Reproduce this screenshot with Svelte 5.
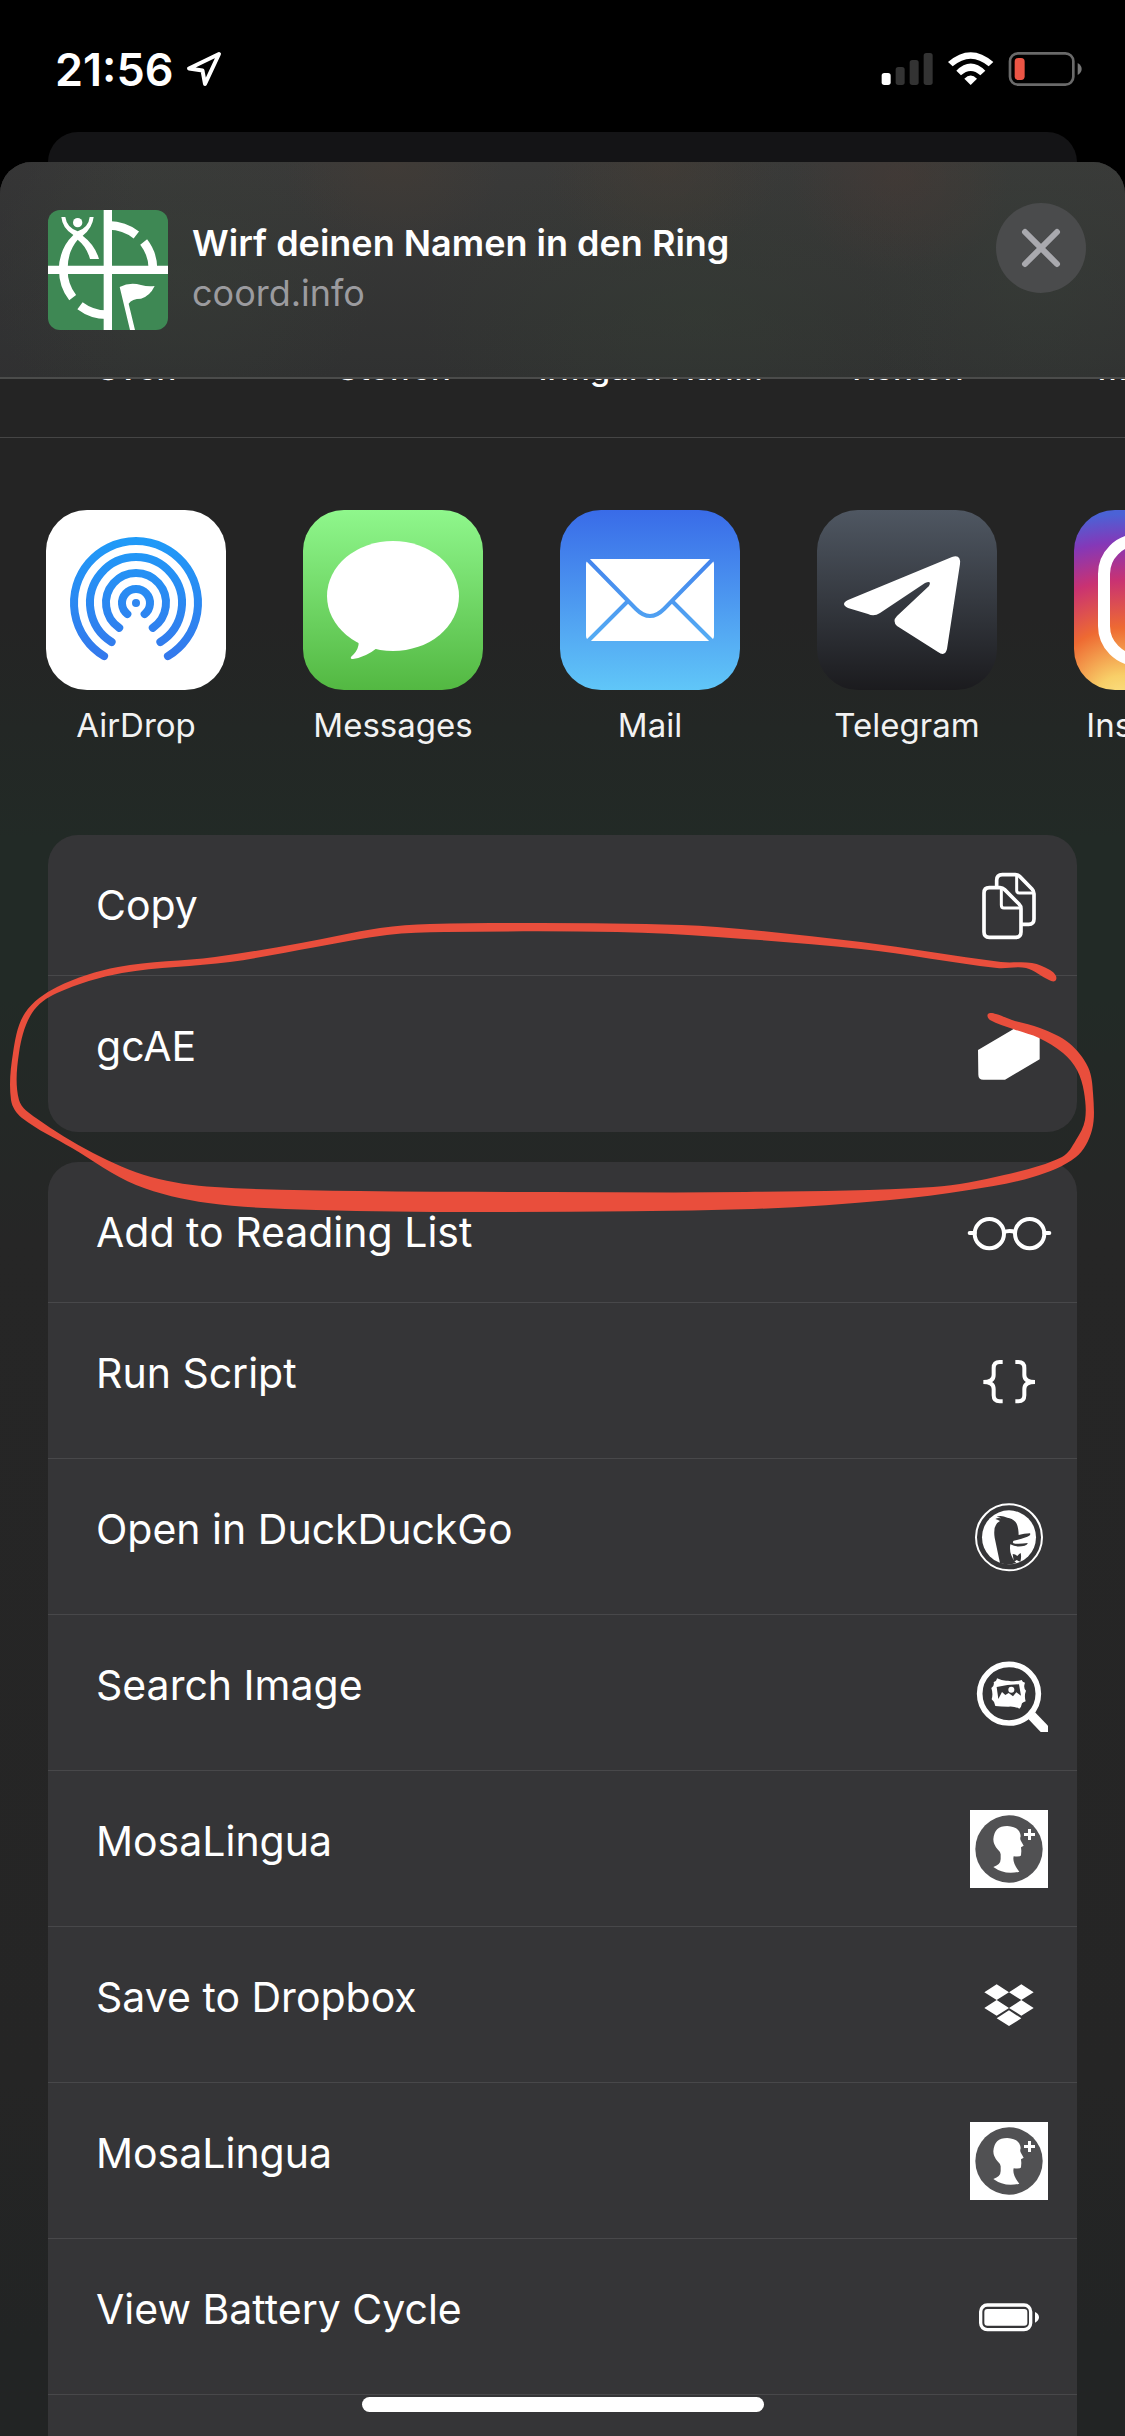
<script>
  const people = ['Sven', 'Steffen', 'Irmgard Han…', 'Kenton', 'Matthias'];
  const apps = [
    { name: 'AirDrop', icon: 'airdrop' },
    { name: 'Messages', icon: 'messages' },
    { name: 'Mail', icon: 'mail' },
    { name: 'Telegram', icon: 'telegram' },
    { name: 'Instagram', icon: 'instagram' }
  ];
  const groups = [
    [
      { label: 'Copy', icon: 'copy' },
      { label: 'gcAE', icon: 'shape' }
    ],
    [
      { label: 'Add to Reading List', icon: 'glasses' },
      { label: 'Run Script', icon: 'braces' },
      { label: 'Open in DuckDuckGo', icon: 'duck' },
      { label: 'Search Image', icon: 'search' },
      { label: 'MosaLingua', icon: 'head' },
      { label: 'Save to Dropbox', icon: 'dropbox' },
      { label: 'MosaLingua', icon: 'head' },
      { label: 'View Battery Cycle', icon: 'battery' },
      { label: '', icon: '' }
    ]
  ];

  // AirDrop rings: open at the bottom, one arc per radius
  function ring(r, deg) {
    const a = (deg * Math.PI) / 180;
    const dx = r * Math.sin(a);
    const y = 93 + r * Math.cos(a);
    return `M${90 - dx} ${y}A${r} ${r} 0 1 1 ${90 + dx} ${y}`;
  }
  const rings = [ring(62, 31), ring(46, 32), ring(30, 34), ring(14, 38)];

  // Outline of the hand-drawn marker loop, outer edge then inner edge
  const loop = [
    [1056, 976], [1050, 970], [1032, 963], [1001, 962], [861, 942], [717, 927], [646, 924], [540, 923], [430, 924],
    [380, 928], [301, 943], [215, 957], [118, 967], [57, 987], [25, 1013], [13, 1053], [11, 1100],
    [22, 1118], [72, 1148], [136, 1185], [208, 1203], [316, 1210], [502, 1212], [753, 1209], [890, 1200],
    [969, 1190], [1033, 1177], [1076, 1157], [1092, 1130], [1093, 1093], [1088, 1067], [1069, 1043],
    [1040, 1028], [1012, 1020], [996, 1014], [988, 1014], [990, 1020], [1013, 1029], [1039, 1038], [1063, 1053],
    [1077, 1070], [1084, 1092], [1085, 1120], [1076, 1140], [1062, 1157], [1004, 1175], [933, 1187],
    [746, 1192], [550, 1192], [359, 1191], [215, 1187], [151, 1177], [93, 1153], [36, 1118], [19, 1100], [19, 1053],
    [32, 1013], [57, 993], [122, 973], [230, 962], [316, 947], [387, 935], [445, 932], [617, 932], [717, 937],
    [861, 949], [997, 968], [1026, 968], [1049, 980], [1055, 981]
  ];
  // Smooth curve that passes through every point
  const count = loop.length;
  const at = (i) => loop[(i + count) % count];
  const loopPath =
    `M${at(0).join(' ')}` +
    loop
      .map((p, i) => {
        const [a, c, d] = [at(i - 1), at(i + 1), at(i + 2)];
        const reach = Math.hypot(c[0] - p[0], c[1] - p[1]) / 3;
        const step = (u, v) => {
          const len = Math.hypot(v[0] - u[0], v[1] - u[1]) || 1;
          return [((v[0] - u[0]) / len) * reach, ((v[1] - u[1]) / len) * reach];
        };
        const s = step(a, c);
        const e = step(p, d);
        return `C${p[0] + s[0]} ${p[1] + s[1]} ${c[0] - e[0]} ${c[1] - e[1]} ${c[0]} ${c[1]}`;
      })
      .join('') + 'Z';
</script>

<div class="screen">
  <div class="status">
    <div class="clock">
      <span>21:56</span>
      <svg width="36" height="36" viewBox="0 0 36 36" aria-hidden="true">
        <path d="M33 3 3 17.5l13.5 2L19 33z" fill="none" stroke="#fff" stroke-width="4" stroke-linejoin="round" />
      </svg>
    </div>
    <svg width="204" height="38" viewBox="64 60 612 114" aria-hidden="true">
      <rect x="66" y="129" width="27" height="36" rx="8" fill="#fff" />
      <rect x="108" y="111" width="27" height="54" rx="8" fill="#333" />
      <rect x="150" y="90" width="27" height="75" rx="8" fill="#333" />
      <rect x="192" y="69" width="27" height="96" rx="8" fill="#333" />
      <path d="M265 96Q333 37 401 96L387 109Q333 63 279 109Z" fill="#fff" />
      <path d="M290 122Q333 79 377 122L362 136Q333 110 304 136Z" fill="#fff" />
      <path d="M314 146Q333 127 352 146L333 165Z" fill="#fff" />
      <rect x="451" y="70" width="190" height="94" rx="24" fill="none" stroke="#6a6a6a" stroke-width="8" />
      <rect x="465" y="84" width="30" height="66" rx="11" fill="#ec5545" />
      <path d="M654 99q12 7 12 18t-12 18z" fill="#777" />
    </svg>
  </div>

  <div class="behind"></div>

  <section class="sheet" aria-label="Share">
    <header>
      <svg class="thumb" viewBox="54 60 360 360" aria-hidden="true">
        <rect x="54" y="60" width="360" height="360" fill="#3e8854" />
        <g fill="none" stroke="#fff" stroke-width="26">
          <path d="M234 106A134 134 0 0 1 319 135" />
          <path d="M341 156A134 134 0 0 1 369 240" />
          <path d="M100 240A134 134 0 0 0 128 323" />
          <path d="M150 347A134 134 0 0 0 234 374" />
        </g>
        <path d="M221 60h25v360h-25zM54 227h360v25H54z" fill="#fff" />
        <circle cx="143" cy="98" r="14" fill="#fff" />
        <path d="M86 240Q88 175 130 135Q97 115 94 81H106Q110 112 143 124Q176 112 179 81H191Q187 115 158 137Q195 165 207 207H180Q170 170 143 149Q112 185 113 240Z" fill="#fff" />
        <path d="M269 291Q300 275 333 285Q354 291 374 288Q360 318 333 326Q306 326 296 341L315 420H300Z" fill="#fff" />
      </svg>
      <div class="titles">
        <h1>Wirf deinen Namen in den Ring</h1>
        <p>coord.info</p>
      </div>
      <button class="close" aria-label="Close">
        <svg width="90" height="90" viewBox="0 0 90 90" aria-hidden="true">
          <path d="M29 29 61 61M61 29 29 61" stroke="#a9a9ae" stroke-width="6" stroke-linecap="round" />
        </svg>
      </button>
    </header>

    <div class="body">
      <ul class="people">
        {#each people as person}
          <li>{person}</li>
        {/each}
      </ul>

      <div class="apps">
        {#each apps as app}
          <button class="app">
            <svg class="appicon" viewBox="0 0 180 180" aria-hidden="true">
              {#if app.icon === 'airdrop'}
                <linearGradient id="ad" gradientUnits="userSpaceOnUse" x1="0" y1="27" x2="0" y2="150">
                  <stop offset="0" stop-color="#1f9bf8" /><stop offset="1" stop-color="#3478ec" />
                </linearGradient>
                <rect width="180" height="180" fill="#fff" />
                <g fill="none" stroke="url(#ad)" stroke-width="8" stroke-linecap="round">
                  {#each rings as d}<path {d} />{/each}
                </g>
                <circle cx="90" cy="93" r="4" fill="#2f87f0" />
              {:else if app.icon === 'messages'}
                <linearGradient id="ms" x1="0" y1="0" x2="0" y2="1">
                  <stop offset="0" stop-color="#8ff78c" /><stop offset="1" stop-color="#53b842" />
                </linearGradient>
                <rect width="180" height="180" fill="url(#ms)" />
                <ellipse cx="90" cy="86" rx="66" ry="55" fill="#fff" />
                <path d="M53 126Q60 136 48 147Q47 149 50 149Q63 147 74 138Z" fill="#fff" />
              {:else if app.icon === 'mail'}
                <linearGradient id="ml" gradientUnits="userSpaceOnUse" x1="0" y1="0" x2="0" y2="180">
                  <stop offset="0" stop-color="#396be8" /><stop offset="1" stop-color="#60c6f8" />
                </linearGradient>
                <rect width="180" height="180" fill="url(#ml)" />
                <rect x="26" y="49" width="128" height="82" rx="5" fill="#fff" />
                <path d="M27 49 76 99Q90 113 104 99L153 49M28 131 68 91M152 131 112 91" fill="none" stroke="url(#ml)" stroke-width="4" />
              {:else if app.icon === 'telegram'}
                <linearGradient id="tg" x1="0" y1="0" x2="0" y2="1">
                  <stop offset="0" stop-color="#4f5762" /><stop offset="1" stop-color="#1b1b1e" />
                </linearGradient>
                <rect width="180" height="180" fill="url(#tg)" />
                <path d="M135 47Q144 44 143 54L130 139Q128 147 121 142L80 116Q75 111 80 106L112 76Q115 70 108 73L63 103Q57 107 51 104L31 98Q23 94 31 90Z" fill="#fff" />
              {:else}
                <radialGradient id="ig" gradientUnits="userSpaceOnUse" cx="48" cy="194" r="190">
                  <stop offset="0" stop-color="#fbe58a" /><stop offset=".15" stop-color="#f8cf68" />
                  <stop offset=".4" stop-color="#ee6a32" /><stop offset=".65" stop-color="#c93272" />
                  <stop offset=".85" stop-color="#8438b8" /><stop offset="1" stop-color="#4b62d6" />
                </radialGradient>
                <rect width="180" height="180" fill="url(#ig)" />
                <rect x="30" y="30" width="120" height="120" rx="34" fill="none" stroke="#fff" stroke-width="12" />
                <circle cx="90" cy="90" r="28" fill="none" stroke="#fff" stroke-width="12" />
              {/if}
            </svg>
            <span>{app.name}</span>
          </button>
        {/each}
      </div>

      {#each groups as group}
        <div class="card">
          {#each group as row}
            <button class="row" aria-label={row.label || 'More'}>
              <span>{row.label}</span>
              {#if row.icon === 'copy'}
                <svg viewBox="90 48 234 234" aria-hidden="true">
                  <g fill="none" stroke="#fff" stroke-width="11" stroke-linejoin="round">
                    <path d="M170 112V91Q170 74 187 74H226Q234 74 239 79L276 117Q282 123 282 131V207Q282 223 266 223H246" />
                    <path d="M230 75V121Q230 129 238 129H281" stroke-width="9" />
                    <path d="M148 113H180Q188 113 194 119L237 162Q243 168 243 176V246Q243 262 227 262H148Q132 262 132 246V129Q132 113 148 113Z" />
                    <path d="M184 114V165Q184 174 192 174H242" stroke-width="9" />
                  </g>
                </svg>
              {:else if row.icon === 'shape'}
                <svg viewBox="90 495 234 234" aria-hidden="true">
                  <path d="M114 600 221 537H299V628L195 689H130Q115 689 115 674Z" fill="#fff" />
                </svg>
              {:else if row.icon === 'glasses'}
                <svg class="wide" viewBox="78 39 258 234" aria-hidden="true">
                  <g fill="none" stroke="#fff" stroke-width="12">
                    <circle cx="148" cy="161" r="44" /><circle cx="269" cy="161" r="44" />
                    <path d="M190 157Q208 149 227 157" />
                    <path d="M89 159H104M313 159H328" stroke-linecap="round" />
                  </g>
                </svg>
              {:else if row.icon === 'braces'}
                <svg viewBox="90 484 234 234" aria-hidden="true">
                  <g fill="none" stroke="#fff" stroke-width="12">
                    <path d="M188 544H179Q161 544 161 562V583Q161 604 130 604Q161 604 161 625V644Q161 662 179 662H188" />
                    <path d="M226 544H235Q253 544 253 562V583Q253 604 285 604Q253 604 253 625V644Q253 662 235 662H226" />
                  </g>
                </svg>
              {:else if row.icon === 'duck'}
                <svg viewBox="90 53 234 234" aria-hidden="true">
                  <circle cx="207" cy="171" r="99" fill="none" stroke="#fff" stroke-width="6" />
                  <circle cx="207" cy="171" r="81" fill="#fff" />
                  <path d="M180 248Q173 215 164 172Q158 132 180 122Q172 117 166 116Q172 112 184 114Q176 109 170 109Q184 104 202 112Q216 113 226 124Q235 134 236 164Q252 160 270 159Q274 164 262 169Q240 177 221 181Q214 188 226 190Q244 191 263 188Q264 193 254 196Q230 202 211 192Q206 220 225 244L229 248Q204 256 180 248Z" fill="#353537" />
                  <path d="M218 221Q226 221 232 227Q238 220 242 218Q245 230 241 244Q235 243 230 239Q226 243 221 241Z" fill="#353537" />
                </svg>
              {:else if row.icon === 'search'}
                <svg viewBox="90 520 234 234" aria-hidden="true">
                  <circle cx="207" cy="639" r="88" fill="none" stroke="#fff" stroke-width="17" />
                  <path d="M265 715 285 695 324 735V755H303Z" fill="#fff" />
                  <path d="M171 593Q188 602 204 600Q226 604 245 598Q247 604 255 606Q249 622 258 630Q252 645 257 662Q249 665 246 668Q244 680 238 684Q222 676 205 678Q184 678 166 676Q165 664 155 656Q160 640 154 622Q164 616 161 604Q170 602 171 593Z" fill="#fff" />
                  <path d="M170 619Q204 611 237 611L243 645L229 635L219 647L206 637L196 643L186 634L175 655Z" fill="#353537" />
                  <circle cx="214" cy="627" r="9" fill="#fff" />
                </svg>
              {:else if row.icon === 'head'}
                <svg viewBox="90 60 234 234" aria-hidden="true">
                  <rect x="90" y="60" width="234" height="234" fill="#fff" />
                  <circle cx="207" cy="177" r="101" fill="#515153" />
                  <path d="M160 231Q182 224 182 207V193Q181 185 172 177Q160 163 160 148Q162 108 202 108Q240 110 242 139Q239 147 243 153L251 167L243 172L244 183L243 196Q242 201 221 199Q216 218 238 245Q194 256 160 231Z" fill="#fff" />
                  <path d="M264 117h9v12h12v9h-12v12h-9v-12h-12v-9h12z" fill="#fff" />
                </svg>
              {:else if row.icon === 'dropbox'}
                <svg viewBox="90 527 234 234" aria-hidden="true">
                  <path d="M170 582l37 24-37 23-37-23zM244 582l37 24-37 23-37-23zM170 629l37 24-37 23-37-23zM244 629l37 24-37 23-37-23zM207 660l37 24-37 23-37-23z" fill="#fff" />
                </svg>
              {:else if row.icon === 'battery'}
                <svg viewBox="90 533 234 234" aria-hidden="true">
                  <rect x="122" y="614" width="150" height="74" rx="20" fill="none" stroke="#fff" stroke-width="10" />
                  <rect x="133" y="626" width="129" height="50" rx="9" fill="#fff" />
                  <path d="M285 635q12 6 12 16t-12 16z" fill="#fff" />
                </svg>
              {/if}
            </button>
          {/each}
        </div>
      {/each}
    </div>
  </section>

  <svg class="marker" viewBox="0 900 1125 330" aria-hidden="true">
    <path d={loopPath} fill="#e94e3c" />
  </svg>
  <div class="home"></div>
</div>

<style>
  :global(body) {
    margin: 0;
    background: #000;
  }
  .screen {
    position: relative;
    display: flex;
    flex-direction: column;
    height: 100vh;
    overflow: hidden;
    background: #000;
    color: #fff;
    font-family: Inter, 'Liberation Sans', sans-serif;
  }
  button {
    margin: 0;
    padding: 0;
    border: 0;
    background: none;
    color: inherit;
    font: inherit;
    text-align: left;
  }
  svg {
    display: block;
    flex: none;
  }
  .status {
    display: flex;
    flex: none;
    justify-content: space-between;
    align-items: center;
    height: 132px;
    padding: 6px 40px 0 55px;
    box-sizing: border-box;
  }
  .clock {
    display: flex;
    align-items: center;
    gap: 12px;
    font-size: 45px;
    font-weight: 600;
  }
  .behind {
    flex: none;
    height: 60px;
    margin: 0 48px -30px;
    border-radius: 30px 30px 0 0;
    background: #141416;
  }
  .sheet {
    display: flex;
    flex: 1;
    flex-direction: column;
    min-height: 0;
    overflow: hidden;
    border-radius: 32px 32px 0 0;
    background: #242424;
    position: relative;
  }
  header {
    display: flex;
    flex: none;
    align-items: flex-start;
    height: 217px;
    padding: 48px 39px 0 48px;
    box-sizing: border-box;
    border-bottom: 2px solid #4b4c4b;
    background:
      radial-gradient(ellipse 110px 90px at 35% 0, #463c3480, transparent),
      radial-gradient(ellipse 120px 100px at 59% 0, #463c3480, transparent),
      radial-gradient(ellipse 110px 100px at 80% 6%, #483a3480, transparent),
      radial-gradient(ellipse 200px 160px at 16% 50%, #363d3680, transparent),
      radial-gradient(ellipse 280px 170px at 62% 70%, #343d3480, transparent),
      radial-gradient(ellipse 180px 200px at 92% 50%, #363e3780, transparent),
      linear-gradient(90deg, #30303280, transparent 12%),
      linear-gradient(#3a3a39, #303131);
  }
  .thumb {
    width: 120px;
    height: 120px;
    border-radius: 12px;
  }
  .titles {
    flex: 1;
    min-width: 0;
    padding: 8px 24px 0;
  }
  h1,
  p {
    margin: 0;
    font-size: 36px;
    line-height: 50px;
    white-space: nowrap;
  }
  h1 {
    font-weight: 600;
  }
  p {
    color: #9b9b9f;
  }
  .close {
    width: 90px;
    height: 90px;
    margin-top: -7px;
    border-radius: 50%;
    background: #4a4b4c;
  }
  .body {
    flex: 1;
    min-height: 0;
    overflow: hidden;
    background: linear-gradient(#242424 0, #242424 240px, #222a26 460px, #222a26 620px, #262626 860px, #252525 1700px, #222424 1960px);
  }
  .people {
    display: flex;
    gap: 17px;
    margin: -31px 0 0;
    padding: 0 0 49px 17px;
    border-bottom: 1px solid #454545;
    list-style: none;
    font-size: 33px;
    font-weight: 500;
    line-height: 40px;
    text-align: center;
    white-space: nowrap;
  }
  .people li {
    flex: none;
    width: 240px;
  }
  .apps {
    display: flex;
    gap: 77px;
    padding: 72px 0 90px 46px;
  }
  .app {
    display: flex;
    flex: none;
    flex-direction: column;
    align-items: center;
    gap: 15px;
    width: 180px;
    font-size: 33px;
    line-height: 40px;
    color: #f2f2f2;
  }
  .appicon {
    width: 180px;
    height: 180px;
    border-radius: 41px;
  }
  .card {
    margin: 0 48px 30px;
    overflow: hidden;
    border-radius: 30px;
    background: #353537;
  }
  .row {
    display: flex;
    align-items: center;
    justify-content: space-between;
    width: 100%;
    height: 156px;
    padding: 0 29px 0 48px;
    box-sizing: border-box;
    border-bottom: 1px solid #48484a;
    font-size: 41px;
    line-height: 60px;
  }
  .row:first-child {
    height: 141px;
  }
  .row:last-child {
    border-bottom: 0;
  }
  .row span {
    align-self: flex-start;
    padding-top: 40px;
  }
  .row svg {
    width: 78px;
    height: 78px;
  }
  .row svg.wide {
    width: 86px;
    margin-right: -4px;
  }
  .marker {
    position: absolute;
    top: 900px;
    left: 0;
    width: 100%;
    pointer-events: none;
  }
  .home {
    position: absolute;
    bottom: 24px;
    left: 50%;
    width: 402px;
    height: 15px;
    margin-left: -201px;
    border-radius: 8px;
    background: #fff;
  }
</style>
